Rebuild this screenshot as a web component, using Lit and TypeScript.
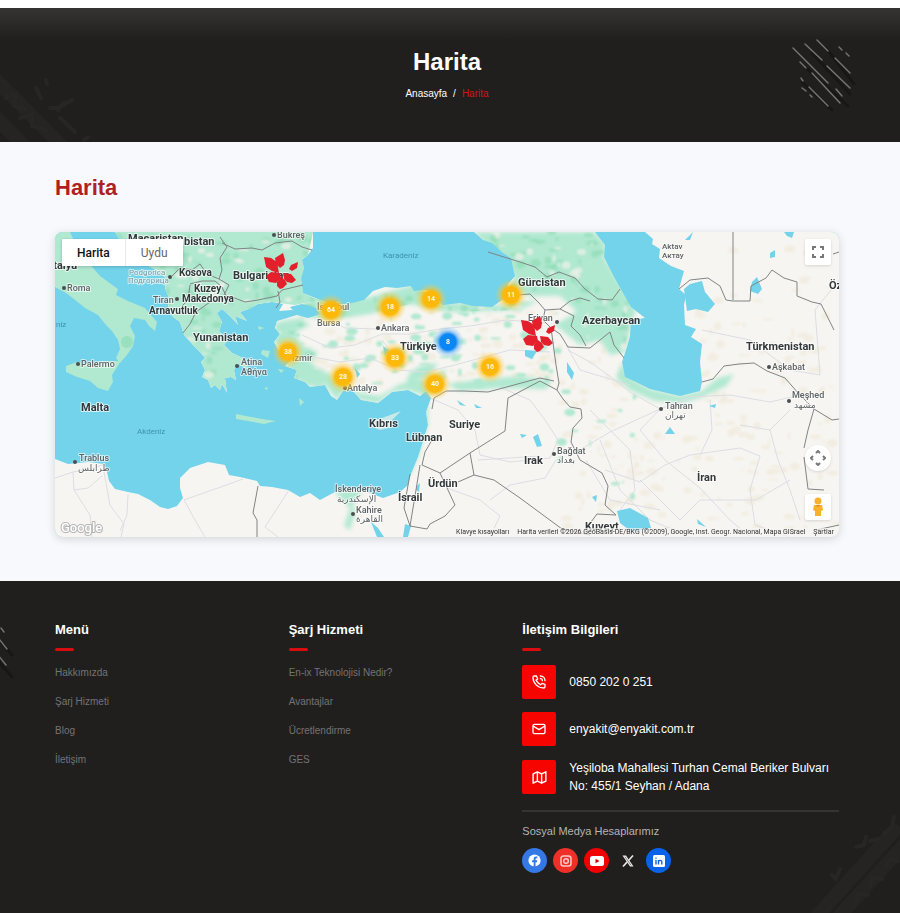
import { LitElement, html, css, svg } from "lit";
import { customElement, state } from "lit/decorators.js";
import { classMap } from "lit/directives/class-map.js";

/* The map is drawn in its own coordinate frame; markers are placed as a share of it. */
const FRAME = { x: 55, y: 232, w: 784, h: 305 };

type Label = { t: string; x: number; y: number; k: "country" | "minor" | "city" | "tiny" | "sea" | "faint" };

const LABELS: Label[] = [
  { t: "Bulgaristan", x: 233, y: 279, k: "country" },
  { t: "bistan", x: 184, y: 245, k: "country" },
  { t: "Macaristan", x: 128, y: 242, k: "country" },
  { t: "İtalya", x: 50, y: 269, k: "country" },
  { t: "Kosova", x: 179, y: 276, k: "minor" },
  { t: "Kuzey", x: 194, y: 292, k: "minor" },
  { t: "Makedonya", x: 182, y: 302, k: "minor" },
  { t: "Arnavutluk", x: 149, y: 314, k: "minor" },
  { t: "Yunanistan", x: 193, y: 341, k: "country" },
  { t: "Türkiye", x: 400, y: 350, k: "country" },
  { t: "Gürcistan", x: 518, y: 286, k: "country" },
  { t: "Azerbaycan", x: 582, y: 324, k: "country" },
  { t: "Türkmenistan", x: 746, y: 350, k: "country" },
  { t: "Malta", x: 81, y: 411, k: "country" },
  { t: "Kıbrıs", x: 369, y: 427, k: "country" },
  { t: "Lübnan", x: 406, y: 441, k: "country" },
  { t: "Suriye", x: 449, y: 428, k: "country" },
  { t: "Ürdün", x: 428, y: 487, k: "country" },
  { t: "İsrail", x: 398, y: 501, k: "country" },
  { t: "Irak", x: 524, y: 464, k: "country" },
  { t: "İran", x: 697, y: 481, k: "country" },
  { t: "Kuveyt", x: 585, y: 530, k: "country" },
  { t: "Öz", x: 829, y: 289, k: "country" },
  { t: "Bükreş", x: 277, y: 238, k: "city" },
  { t: "Roma", x: 67, y: 291, k: "city" },
  { t: "Palermo", x: 81, y: 367, k: "city" },
  { t: "Tiran", x: 153, y: 303, k: "city" },
  { t: "Atina", x: 241, y: 365, k: "city" },
  { t: "Αθήνα", x: 241, y: 375, k: "city" },
  { t: "İstanbul", x: 317, y: 310, k: "city" },
  { t: "Bursa", x: 317, y: 326, k: "city" },
  { t: "Ankara", x: 381, y: 331, k: "city" },
  { t: "İzmir", x: 292, y: 361, k: "city" },
  { t: "Antalya", x: 347, y: 391, k: "city" },
  { t: "Erivan", x: 528, y: 321, k: "city" },
  { t: "Aktav", x: 662, y: 249, k: "tiny" },
  { t: "Актау", x: 662, y: 258, k: "tiny" },
  { t: "Aşkabat", x: 772, y: 370, k: "city" },
  { t: "Meşhed", x: 792, y: 398, k: "city" },
  { t: "مشهد", x: 794, y: 408, k: "city" },
  { t: "Tahran", x: 665, y: 409, k: "city" },
  { t: "تهران", x: 665, y: 418, k: "city" },
  { t: "Bağdat", x: 557, y: 454, k: "city" },
  { t: "بغداد", x: 557, y: 463, k: "city" },
  { t: "Trablus", x: 79, y: 461, k: "city" },
  { t: "طرابلس", x: 78, y: 471, k: "city" },
  { t: "İskenderiye", x: 335, y: 492, k: "city" },
  { t: "الإسكندرية", x: 337, y: 502, k: "city" },
  { t: "Kahire", x: 356, y: 513, k: "city" },
  { t: "القاهرة", x: 356, y: 522, k: "city" },
  { t: "Podgorica", x: 129, y: 275, k: "faint" },
  { t: "Подгорица", x: 128, y: 283, k: "faint" },
  { t: "Karadeniz", x: 383, y: 258, k: "sea" },
  { t: "Akdeniz", x: 137, y: 434, k: "sea" },
  { t: "niz", x: 56, y: 327, k: "sea" },
];

const DOTS = [
  [274, 235], [64, 288], [78, 364], [177, 299], [237, 366], [378, 328], [345, 388], [557, 322],
  [769, 367], [789, 401], [661, 409], [554, 454], [75, 462], [353, 514], [170, 277],
];

const CLUSTERS = [
  { n: "64", x: 331, y: 310 }, { n: "18", x: 390, y: 307 }, { n: "14", x: 431, y: 299 },
  { n: "11", x: 511, y: 295 }, { n: "38", x: 288, y: 352 }, { n: "33", x: 395, y: 358 },
  { n: "28", x: 343, y: 377 }, { n: "40", x: 435, y: 384 }, { n: "16", x: 490, y: 367 },
  { n: "8", x: 448, y: 342, blue: true },
];

const PINS = [{ x: 281, y: 271 }, { x: 538, y: 334 }];

const MENUS = [
  { title: "Menü", links: ["Hakkımızda", "Şarj Hizmeti", "Blog", "İletişim"] },
  { title: "Şarj Hizmeti", links: ["En-ix Teknolojisi Nedir?", "Avantajlar", "Ücretlendirme", "GES"] },
];

const MAINLAND =
  "M115 232L122 243L135 252L147 265L160 272L166 279L165 288L169 298L168 308L173 317L180 322L184 335L193 345L200 352L205 358L201 362L205 370L202 377L208 380L211 388L215 385L220 390L222 384L227 393L225 378L231 377L236 380L234 370L238 364L249 370L243 358L232 353L224 345L228 340L219 331L222 322L217 313L222 309L230 316L238 325L235 316L247 321L240 312L249 309L258 304L272 302L283 304L279 311L292 310L300 314L287 318L277 321L275 328L280 334L274 342L279 351L291 360L285 366L297 370L294 378L305 382L310 387L325 385L331 396L337 400L343 391L352 390L361 400L378 403L392 392L408 390L420 396L426 391L431 398L426 412L428 425L423 441L418 457L411 474L408 485L400 492L383 498L365 491L350 489L335 492L320 500L310 493L300 497L288 490L272 487L260 486L257 481L240 477L229 475L225 465L208 462L190 468L180 478L180 488L183 498L177 506L168 509L160 507L150 500L138 494L128 492L115 489L109 481L107 472L104 464L88 462L68 464L55 459V537H839V232Z";

const BLACK_SEA =
  "M313 232H474L483 240L492 243L503 253L511 258L513 268L515 276L508 284L507 291L512 296L502 300L492 307L473 306L460 303L443 305L434 296L428 290L414 291L411 286L397 288L385 287L373 291L364 300L352 303L335 305L318 299L303 293L301 278L304 268L302 260L308 255L313 248Z";

const CASPIAN =
  "M595 232H645L653 239L652 244L660 249L659 258L671 266L684 271L679 289L686 295L684 305L685 325L696 329L691 337L702 344L700 362L702 382L700 391L680 396L650 389L636 382L625 377L622 362L627 347L630 336L631 320L645 318L631 307L623 293L613 275L604 257L605 245Z";

const BALKANS =
  "M115 232L122 243L135 252L147 265L160 272L166 279L165 288L169 298L168 308L173 317L180 322L184 335L193 345L200 352L205 358L201 362L205 370L202 377L208 380L211 388L215 385L220 390L222 384L227 393L225 378L231 377L236 380L234 370L238 364L249 370L243 358L232 353L224 345L228 340L219 331L222 322L217 313L222 309L230 316L238 325L235 316L247 321L240 312L249 309L258 304L272 302L295 305L318 300L303 293L301 278L304 268L302 260L308 255L313 232Z";

const GREENS = [
  "M474 232L515 276L508 290L530 296L560 296L575 310L590 330L622 350L636 310L604 257L606 244L595 232Z",
  "M555 325L580 310L632 320L625 352L610 355L600 340L580 345Z",
  "M303 304L318 298L366 298L413 285L440 302L500 305L540 300L520 310L450 312L410 304L370 314L330 320L300 316Z",
  "M275 322L300 318L310 325L294 333L303 346L318 352L310 364L330 374L345 384L360 393L380 396L400 384L430 380L446 368L440 390L428 394L428 425L418 457L410 475L405 470L416 445L423 420L425 396L408 390L392 392L378 403L361 400L345 390L337 400L325 385L310 387L294 378L285 366L291 360L274 342Z",
  "M410 372L422 365L438 363L430 376L405 385Z",
  "M622 362L628 376L650 389L680 396L702 391L718 378L734 374L726 386L700 398L680 403L655 401L630 390L616 378Z",
  "M446 384L476 380L520 376L552 381L546 389L500 388L460 391Z",
  "M335 492L350 489L362 492L353 504L355 514L350 530L344 526L350 508Z",
];

const BORDERS = [
  "M220 237L227 247L220 258L222 270L219 279L229 285L224 295",
  "M222 243L235 249L252 248L262 250L275 243L292 241L302 247L312 250",
  "M219 299L232 297L245 302L258 300L277 296L282 290L303 285",
  "M278 291L280 302L276 308",
  "M172 276L180 268L192 270L200 264L207 274L219 279",
  "M190 285L188 300L182 306L196 312L190 324L183 333",
  "M190 284L202 281L215 281L222 287L227 298L210 302L196 312",
  "M488 252L507 258L520 262L535 267L547 277L559 272L575 278L585 289L598 299L612 300L620 289",
  "M517 295L530 294L539 303L545 310L560 309L570 301L580 298L590 301",
  "M545 310L543 320L551 328L560 334L568 347L590 348L610 332L614 345L624 358",
  "M560 309L574 316L571 326L580 335L586 346",
  "M551 328L554 350L556 365L559 383L557 390L563 399L570 407L581 409L582 418L573 428L571 442",
  "M432 409L434 398L446 391L464 391L488 392L503 388L525 382L540 378L554 381",
  "M557 390L540 381L508 398L505 431L470 453L440 473L422 465L425 452L432 440L427 435",
  "M470 453L474 475L458 482M474 475L494 480L520 498L562 529L590 535",
  "M440 473L455 505L445 516L430 524L427 529L410 526L404 508L410 474",
  "M410 526L416 490L420 465",
  "M571 442L580 460L602 473L608 486L605 505L616 515L597 514L585 530",
  "M679 289L690 280L708 278L720 286L726 300L733 301H750L751 286L766 278L772 270L784 278L797 282L797 296L812 302L821 304L834 330",
  "M733 232V300",
  "M702 382L713 379L724 366L739 364L754 363L767 371L785 378L799 394L814 409L832 420L839 419M814 409L808 430L804 448M804 457L808 489L824 490",
  "M258 486L253 513L257 520V537",
  "M816 530L839 525M833 254L839 252",
];

const ROADS = [
  "M55 478L73 472L95 468L104 464M73 472L74 490L90 515L92 537M74 490L88 488L102 476",
  "M104 472L110 505L124 524L121 537M128 494L127 515L120 531",
  "M184 500L215 489L243 479M184 500L195 520L205 537M289 490L265 527L278 537",
  "M302 335L330 348L355 345L382 334L410 334L440 329L470 326L506 320L545 323",
  "M330 320L345 328L378 329M396 358L382 340M308 356L340 362L370 358L398 370L425 372L455 365L510 350L550 352",
  "M430 398L458 410L475 430L480 455L510 462L550 458L558 440L545 420L530 400L502 388",
  "M447 488L480 500L500 516L490 537M478 460L540 456M490 500L510 485L545 478L556 460",
  "M568 350L590 362L615 380L630 392L660 409L690 397L730 395L770 402L800 395",
  "M660 409L640 430L665 460L700 488L730 520L750 537M660 409L610 432L570 456",
  "M605 470L640 482L665 465L690 455L740 448L760 456L750 490L755 525L790 537",
  "M710 400L712 430L700 455M790 410L770 430L778 460L790 490L800 520M770 430L740 425",
  "M590 410L630 450L635 490L620 510M702 330L750 340L790 370L820 375L815 310L839 280",
  "M600 440L620 490L650 520L690 537M566 345L580 370L630 385",
  "M640 480L680 520L700 500L756 500L790 480M586 460L610 500L660 510",
];

/* Small tonal patches that suggest relief. */
function relief(count: number, seed: number, x0: number, x1: number, y0: number, y1: number) {
  const out: { x: number; y: number; rx: number; ry: number }[] = [];
  let s = seed;
  const rnd = () => (s = (s * 16807) % 2147483647) / 2147483647;
  for (let i = 0; i < count; i++) {
    out.push({ x: x0 + rnd() * (x1 - x0), y: y0 + rnd() * (y1 - y0), rx: 1 + rnd() * 5, ry: 1 + rnd() * 3 });
  }
  return out;
}

@customElement("map-canvas")
export class MapCanvas extends LitElement {
  static styles = css`
    :host { display: block; position: absolute; inset: 0; }
    svg { display: block; width: 100%; height: 100%; }
    text { font-family: Roboto, "Noto Sans", "DejaVu Sans", sans-serif; paint-order: stroke; stroke-linejoin: round; }
    .country { font-size: 11px; font-weight: 700; fill: #33383a; stroke: #ffffffb0; stroke-width: 2; }
    .minor { font-size: 10px; font-weight: 700; fill: #33383a; stroke: #ffffffb0; stroke-width: 2; }
    .city { font-size: 9px; font-weight: 500; fill: #5d6264; stroke: #ffffffa0; stroke-width: 2; }
    .tiny { font-size: 8px; font-weight: 500; fill: #5d6264; stroke: #ffffffa0; stroke-width: 1; }
    .faint { font-size: 8px; fill: #7d9aa0; stroke: #ffffffa0; stroke-width: 2; }
    .sea { font-size: 8px; fill: #3c93ab; }
    .google { font-size: 13px; font-weight: 500; fill: #ffffff; stroke: #b5b5b5; stroke-width: 2; }
    .water { fill: #72d3ea; }
    .land { fill: #f7f5f1; }
    .green { fill: #b0e8d0; }
    .border { fill: none; stroke: #808485; stroke-width: 1; stroke-linejoin: round; }
    .road { fill: none; stroke: #dcdde4; stroke-width: 1; stroke-linejoin: round; }
    .deep { fill: #8bdab2; opacity: 0.6; }
    .pale { fill: #eef1e8; opacity: 0.7; }
    .sand { fill: #efe9dc; opacity: 0.7; }
    .dot { fill: #4b4f51; }
  `;

  render() {
    const patch = (cls: string, list: ReturnType<typeof relief>) =>
      list.map((e) => svg`<ellipse class=${cls} cx=${e.x} cy=${e.y} rx=${e.rx} ry=${e.ry} />`);
    return html`
      <svg viewBox="${FRAME.x} ${FRAME.y} ${FRAME.w} ${FRAME.h}" preserveAspectRatio="none" role="img" aria-label="Harita">
        <defs>
          <clipPath id="greenLand">
            <path d=${BALKANS} />
            ${GREENS.map((d) => svg`<path d=${d} />`)}
          </clipPath>
          <clipPath id="main"><path d=${MAINLAND} /></clipPath>
          <filter id="soft" x="-10%" y="-10%" width="120%" height="120%"><feGaussianBlur stdDeviation="2" /></filter>
          <filter id="patchSoft"><feGaussianBlur stdDeviation="1" /></filter>
        </defs>
        <rect class="water" x="55" y="232" width="784" height="305" />
        <path class="land" d=${MAINLAND} />
        <g clip-path="url(#main)">
          <g filter="url(#patchSoft)">
            ${patch("sand", relief(110, 77, 300, 560, 310, 385))}
            ${patch("sand", relief(200, 31, 560, 839, 330, 537))}
            ${patch("sand", relief(20, 13, 660, 839, 240, 330))}
            ${patch("green", relief(80, 91, 290, 560, 312, 390))}
            ${patch("green", relief(14, 19, 560, 640, 390, 530))}
          </g>
          <path class="green" d=${BALKANS} />
          <g filter="url(#soft)">${GREENS.map((d) => svg`<path class="green" d=${d} />`)}</g>
          <g clip-path="url(#greenLand)"><g filter="url(#patchSoft)">
            ${patch("deep", relief(110, 5, 115, 320, 232, 390))}
            ${patch("pale", relief(60, 17, 180, 320, 240, 390))}
            ${patch("deep", relief(80, 43, 480, 640, 232, 350))}
            ${patch("pale", relief(50, 29, 480, 640, 232, 350))}
            ${patch("deep", relief(60, 67, 290, 520, 285, 320))}
          </g></g>
          ${ROADS.map((d) => svg`<path class="road" d=${d} />`)}
        </g>
        <path class="green" d="M55 232H70L76 245L88 262L100 276L118 289L116 295L128 301L145 308L157 322L155 331L149 326L145 320L134 318L130 326L135 336L133 346L127 355L120 363L116 358L120 349L118 340L112 331L106 325L98 315L85 308L74 299L66 293L55 287Z" />
        <path class="green" d="M66 366L77 362L90 364L104 361L121 361L112 375L113 382L108 391L98 388L90 381L77 377L66 372Z" />
        <circle class="deep" cx="127" cy="342" r="6" />
        <path class="green" d="M236 414L246 416L262 419L276 421L264 424L248 421L236 419Z" />
        <path class="pale" d="M370 421L382 418L401 411L392 420L393 427L380 430L370 426Z" />
        <path class="green" d="M262 350L270 351L268 358L261 354ZM258 326L264 328L259 330ZM299 398L304 402L300 406ZM264 388L268 387L267 390ZM278 369L284 370L281 373Z" />
        <path class="water" d=${BLACK_SEA} />
        <path class="water" d=${CASPIAN} />
        <path class="water" d="M684 289L690 284L702 281L705 292L715 304L708 312L696 309L687 311Z" />
        <path class="water" d="M290 307L302 304L316 308L320 314L308 318L297 315Z" />
        <path class="water" d="M752 282L757 277L762 289L758 294L750 291ZM784 232H794L792 238L787 236ZM770 253L775 250L775 257L770 258ZM685 240L693 232L690 240Z" />
        <path class="water" d="M617 511L630 508L648 518L651 528L632 532L620 523ZM665 434L670 427L675 434ZM709 406L716 404L715 408ZM567 362L574 373L572 380L567 372ZM525 350L537 351L532 359L525 356ZM533 437L538 434L542 446L537 447ZM371 522L378 528L384 537H377ZM405 524L411 526L408 537H403ZM417 486L420 483L419 492L416 490Z" />
        <path class="water" d="M457 400L466 406L460 405ZM474 404L482 408L476 408ZM592 497L597 495L596 502ZM383 346L389 350L385 356ZM355 368L360 374L357 378ZM697 519L706 527L698 524ZM520 434L527 435L522 438Z" />
        ${BORDERS.map((d) => svg`<path class="border" d=${d} />`)}
        ${DOTS.map(([x, y]) => svg`<circle class="dot" cx=${x} cy=${y} r="2" />`)}
        ${LABELS.map((l) => svg`<text class=${l.k} x=${l.x} y=${l.y}>${l.t}</text>`)}
        <text class="google" x="61" y="532">Google</text>
      </svg>`;
  }
}

@customElement("app-root")
export class AppRoot extends LitElement {
  @state() private view: "Harita" | "Uydu" = "Harita";

  static styles = css`
    :host {
      display: flex; flex-direction: column; min-height: 100vh; box-sizing: border-box;
      border-top: 8px solid #ffffff; background: #f8f9fc;
      font-family: "Liberation Sans", Arial, sans-serif; color: #ffffff;
    }
    *, *::before, *::after { box-sizing: border-box; }
    h1, h2, h3, p, ul, ol { margin: 0; padding: 0; }
    ul, ol { list-style: none; }
    a { color: inherit; text-decoration: none; }
    address { font-style: normal; }
    button { font: inherit; border: 0; padding: 0; cursor: pointer; }
    .wrap { padding-left: 55px; padding-right: 61px; }

    .banner {
      position: relative; overflow: hidden; min-height: 134px; padding-top: 40px;
      display: flex; flex-direction: column; align-items: center; gap: 12px;
      background: linear-gradient(#353433, #211f1e 32px, #211f1e);
    }
    .banner h1 { font-size: 24px; line-height: 28px; }
    .crumbs { display: flex; gap: 6px; font-size: 10px; line-height: 12px; }
    .crumbs .here { color: #d5121a; }
    .tread { position: absolute; bottom: 0; fill: none; stroke: #272625; stroke-width: 4; stroke-linecap: round; }
    .tread .rib { stroke-width: 14; stroke: #252423; }
    .tread.left { left: 0; }
    .tread.right { right: 0; }
    .hatch { position: absolute; fill: none; stroke: #777675; stroke-width: 1.4; stroke-linecap: round; }
    .hatch .shade { stroke: #181716; stroke-width: 3; }
    .hatch.top { right: 42px; top: 30px; }
    .hatch.side { left: 0; top: 46px; }

    main { padding-top: 34px; padding-bottom: 44px; }
    main h2 { font-size: 22px; line-height: 24px; color: #b01f27; margin-bottom: 32px; }
    .map {
      position: relative; height: 305px; border-radius: 8px; overflow: hidden; color: #333333;
      font-family: Roboto, "Liberation Sans", sans-serif;
    }
    .frame { border-radius: 8px; box-shadow: 0 2px 10px #00000026; }
    .types { position: absolute; left: 7px; top: 7px; display: flex; background: #ffffff; box-shadow: 0 1px 3px #00000030; }
    .types button { height: 27px; padding: 0 15px; background: #ffffff; font-size: 12px; color: #666666; }
    .types button + button { border-left: 1px solid #e8e8e8; }
    .types button.on { color: #111111; font-weight: 500; }
    .tool {
      position: absolute; right: 8px; width: 26px; height: 26px; background: #ffffff; border-radius: 2px;
      display: grid; place-items: center; box-shadow: 0 1px 3px #00000022;
    }
    .tool.full { top: 7px; }
    .tool.pan { bottom: 66px; border-radius: 50%; }
    .tool.man { bottom: 17px; }
    .cluster {
      position: absolute; transform: translate(-50%, -50%); width: 32px; height: 32px; border-radius: 50%;
      color: #fff8e0; font-size: 7px; font-weight: 700;
      background: radial-gradient(circle, #fdb90b 0 8px, #fdbf1ea0 10px, #fdc83660 12px, #fdc83600 16px);
    }
    .cluster.blue { background: radial-gradient(circle, #0b87f5 0 8px, #2d98f8a0 10px, #58aefa60 12px, #58aefa00 16px); }
    .pin { position: absolute; transform: translate(-50%, -50%); background: none; width: 36px; height: 36px; }
    .legal { position: absolute; right: 0; bottom: 0; display: flex; gap: 8px; padding: 0 5px; font-size: 7px; line-height: 9px; background: #f5f5f5b0; color: #333333; }

    footer { position: relative; overflow: hidden; flex: 1; background: #211f1e; padding-top: 40px; padding-bottom: 38px; }
    .cols { display: grid; grid-template-columns: 11fr 11fr 16fr; gap: 16px; position: relative; }
    h3 { font-size: 13px; line-height: 18px; }
    h3::after { content: ""; display: block; width: 19px; height: 3px; margin-top: 9px; border-radius: 2px; background: #d80d0d; }
    .links { margin-top: 16px; display: flex; flex-direction: column; gap: 17px; font-size: 10px; line-height: 12px; color: #747372; }
    .contacts { margin-top: 14px; display: flex; flex-direction: column; gap: 13px; font-size: 12px; line-height: 18px; }
    .contacts li { display: flex; align-items: center; gap: 13px; }
    .tile { flex: none; width: 34px; height: 34px; border-radius: 2px; background: #f60400; display: grid; place-items: center; }
    .line { fill: none; stroke: #ffffff; stroke-width: 2; stroke-linecap: round; stroke-linejoin: round; }
    .social { margin-top: 15px; border-top: 2px solid #353433; padding-top: 12px; }
    .social p { font-size: 11px; line-height: 14px; color: #b5b4b3; margin-bottom: 10px; }
    .social ul { display: flex; gap: 6px; }
    .social a { width: 25px; height: 25px; border-radius: 50%; display: grid; place-items: center; }
    .fb { background: #3478e5; }
    .ig { background: #ee3028; }
    .yt { background: #f20000; }
    .in { background: #0a62ea; }
  `;

  private at(x: number, y: number) {
    return `left:${((x - FRAME.x) / FRAME.w) * 100}%;top:${((y - FRAME.y) / FRAME.h) * 100}%`;
  }

  private banner() {
    return html`<header class="banner wrap">
      <svg class="tread left" width="100" height="80" viewBox="0 0 100 80" aria-hidden="true">
        <path class="rib" d="M-6 16L66 88M-6 54L24 84" />
        <path d="M6 36L16 32L14 44L26 48M20 56L32 52L32 64L46 68M36 26L41 36M46 18L47 22M50 46L58 46L72 38M60 56L75 70M64 40L58 48M84 78L88 75" />
      </svg>
      <svg class="hatch top" width="70" height="80" viewBox="0 0 70 80" aria-hidden="true">
        <path class="shade" d="M24 15L62 56M18 30L60 68M38 10L66 46M14 44L44 72" />
        <path d="M5 10L40 45M17 6L34 22M29 2L40 13M39 28L62 50M47 20L62 35M51 9L54 12M58 15L61 18M12 24L18 30M24 35L52 65M13 40L15 43M14 50L18 53M21 49L40 68M22 57L24 59M48 51L54 58" />
      </svg>
      <h1>Harita</h1>
      <nav aria-label="Konum"><ol class="crumbs">
        <li><a href="#">Anasayfa</a></li><li aria-hidden="true">/</li><li class="here" aria-current="page">Harita</li>
      </ol></nav>
    </header>`;
  }

  private map() {
    const tab = (name: "Harita" | "Uydu") => html`<button
      class=${classMap({ on: this.view === name })}
      aria-pressed=${this.view === name}
      @click=${() => (this.view = name)}>${name}</button>`;
    return html`<div class="frame"><div class="map">
      <map-canvas></map-canvas>
      ${CLUSTERS.map((c) => html`<button class=${classMap({ cluster: true, blue: !!c.blue })} style=${this.at(c.x, c.y)}>${c.n}</button>`)}
      ${PINS.map((p) => html`<button class="pin" style=${this.at(p.x, p.y)} aria-label="İstasyon">
        <svg width="36" height="36" viewBox="0 0 36 36" fill="#e3202b" aria-hidden="true">
          <path d="M1 4L8 5L14 9L16 20L9 18L3 14Z" />
          <path d="M12 5L20 0L22 7L21 12L17 15L13 11Z" />
          <path d="M35 9L34 15L29 18L26 16L28 12Z" />
          <path d="M3 23L8 19L17 20L18 25L13 30L6 29Z" />
          <path d="M18 24L22 27L24 31L20 35L17 36L14 33L14 29Z" />
          <path d="M20 20L28 21L33 27L29 30L24 29L21 26Z" />
        </svg></button>`)}
      <div class="types" role="group" aria-label="Harita türü">${tab("Harita")}${tab("Uydu")}</div>
      <button class="tool full" aria-label="Tam ekran">
        <svg width="14" height="14" viewBox="0 0 14 14" fill="none" stroke="#777777" stroke-width="2" aria-hidden="true">
          <path d="M2 5V2H5M9 2H12V5M12 9V12H9M5 12H2V9" />
        </svg>
      </button>
      <button class="tool pan" aria-label="Kaydır">
        <svg width="16" height="16" viewBox="0 0 16 16" fill="none" stroke="#777777" stroke-width="2" aria-hidden="true">
          <path d="M6 3L8 1L10 3M13 6L15 8L13 10M10 13L8 15L6 13M3 10L1 8L3 6" />
        </svg>
      </button>
      <button class="tool man" aria-label="Sokak Görünümü">
        <svg width="12" height="20" viewBox="0 0 12 20" fill="#f7b12b" aria-hidden="true">
          <circle cx="6" cy="4" r="3.5" /><path d="M2 8H10L11 13L9 14V19H3V14L1 13Z" /><path d="M4 8H8L6 10Z" fill="#d88a1c" />
        </svg>
      </button>
      <div class="legal">
        <span>Klavye kısayolları</span>
        <span>Harita verileri ©2026 GeoBasis-DE/BKG (©2009), Google, Inst. Geogr. Nacional, Mapa GISrael</span>
        <a href="#">Şartlar</a>
      </div>
    </div></div>`;
  }

  private social() {
    return html`<div class="social">
      <p>Sosyal Medya Hesaplarımız</p>
      <ul>
        <li><a class="fb" href="#" aria-label="Facebook"><svg width="13" height="13" viewBox="0 0 16 16" aria-hidden="true"><circle cx="8" cy="8" r="7.5" fill="#ffffff" /><path d="M7 16V10H5V7.6H7V6C7 4 8.2 3 10 3H11.5V5.2H10.4C9.6 5.2 9.3 5.6 9.3 6.3V7.6H11.4L11 10H9.3V16Z" fill="#3478e5" /></svg></a></li>
        <li><a class="ig" href="#" aria-label="Instagram"><svg width="12" height="12" viewBox="0 0 12 12" fill="none" stroke="#ffc9c4" stroke-width="1.5" aria-hidden="true"><rect x="1" y="1" width="10" height="10" rx="2.5" /><circle cx="6" cy="6" r="2.3" /><path d="M8.8 3.2H9" /></svg></a></li>
        <li><a class="yt" href="#" aria-label="YouTube"><svg width="14" height="10" viewBox="0 0 14 10" aria-hidden="true"><rect width="14" height="10" rx="2.5" fill="#ffffff" /><path d="M5.5 2.7L9.5 5L5.5 7.3Z" fill="#d80000" /></svg></a></li>
        <li><a class="tw" href="#" aria-label="X"><svg width="12" height="12" viewBox="0 0 12 12" aria-hidden="true"><path d="M0.5 0.5H4L11.5 11.5H8Z" fill="#e8e8e8" /><path d="M3 1.8L9 10.3" stroke="#211f1e" stroke-width="0.5" /><path d="M11 0.5L6.8 5.3M5.2 6.9L1 11.5" stroke="#e8e8e8" stroke-width="1.6" /></svg></a></li>
        <li><a class="in" href="#" aria-label="LinkedIn"><svg width="12" height="12" viewBox="0 0 12 12" aria-hidden="true"><rect width="12" height="12" rx="1.5" fill="#ffffff" /><path d="M3 5V9.5M3 2.5V3.8M5.5 9.5V5M5.5 7C5.5 5 8.8 4.8 8.8 7V9.5" fill="none" stroke="#0a62ea" stroke-width="1.4" /></svg></a></li>
      </ul>
    </div>`;
  }

  render() {
    return html`
      ${this.banner()}
      <main class="wrap"><h2>Harita</h2>${this.map()}</main>
      <footer class="wrap">
        <svg class="hatch side" width="16" height="56" viewBox="0 0 16 56" aria-hidden="true">
          <path class="shade" d="M0 14L12 28M-2 34L12 50" />
          <path d="M1 1L4 5M-4 8L7 22M-2 28L6 38" />
        </svg>
        <svg class="tread right" width="90" height="110" viewBox="0 0 90 110" aria-hidden="true">
          <path class="rib" d="M30 112L94 42M8 112L84 28" />
          <path d="M22 72L26 76L30 66M46 44L54 42L56 34M60 38L68 36M74 30L82 24L84 14M44 104L48 90L58 92M60 84L62 74L72 76M76 64L80 56L88 58" />
        </svg>
        <div class="cols">
          ${MENUS.map((m) => html`<nav aria-label=${m.title}><h3>${m.title}</h3>
            <ul class="links">${m.links.map((l) => html`<li><a href="#">${l}</a></li>`)}</ul></nav>`)}
          <section><h3>İletişim Bilgileri</h3>
            <ul class="contacts">
              <li><span class="tile"><svg class="line" width="16" height="16" viewBox="0 0 24 24" aria-hidden="true"><path d="M3 5C3 3.9 3.9 3 5 3H8.3L10 7.5L7.6 9.2C8.8 11.9 11.1 14.5 14.5 16.2L16.500 14L21 15.7V19C21 20.1 20.1 21 19 21C10.2 21 3 13.8 3 5ZM14 3C18 3 21 6 21 10M14 7C15.7 7 17 8.3 17 10" /></svg></span><a href="tel:08502020251">0850 202 0 251</a></li>
              <li><span class="tile"><svg class="line" width="16" height="16" viewBox="0 0 24 24" aria-hidden="true"><rect x="3" y="5" width="18" height="14" rx="2" /><path d="M4 8L12 13L20 8" /></svg></span><a href="mailto:enyakit@enyakit.com.tr">enyakit@enyakit.com.tr</a></li>
              <li><span class="tile"><svg class="line" width="17" height="17" viewBox="0 0 24 24" aria-hidden="true"><path d="M3 7L9 4L15 7L21 4V17L15 20L9 17L3 20ZM9 4V17M15 7V20" /></svg></span><address>Yeşiloba Mahallesi Turhan Cemal Beriker Bulvarı<br />No: 455/1 Seyhan / Adana</address></li>
            </ul>
            ${this.social()}
          </section>
        </div>
      </footer>`;
  }
}
